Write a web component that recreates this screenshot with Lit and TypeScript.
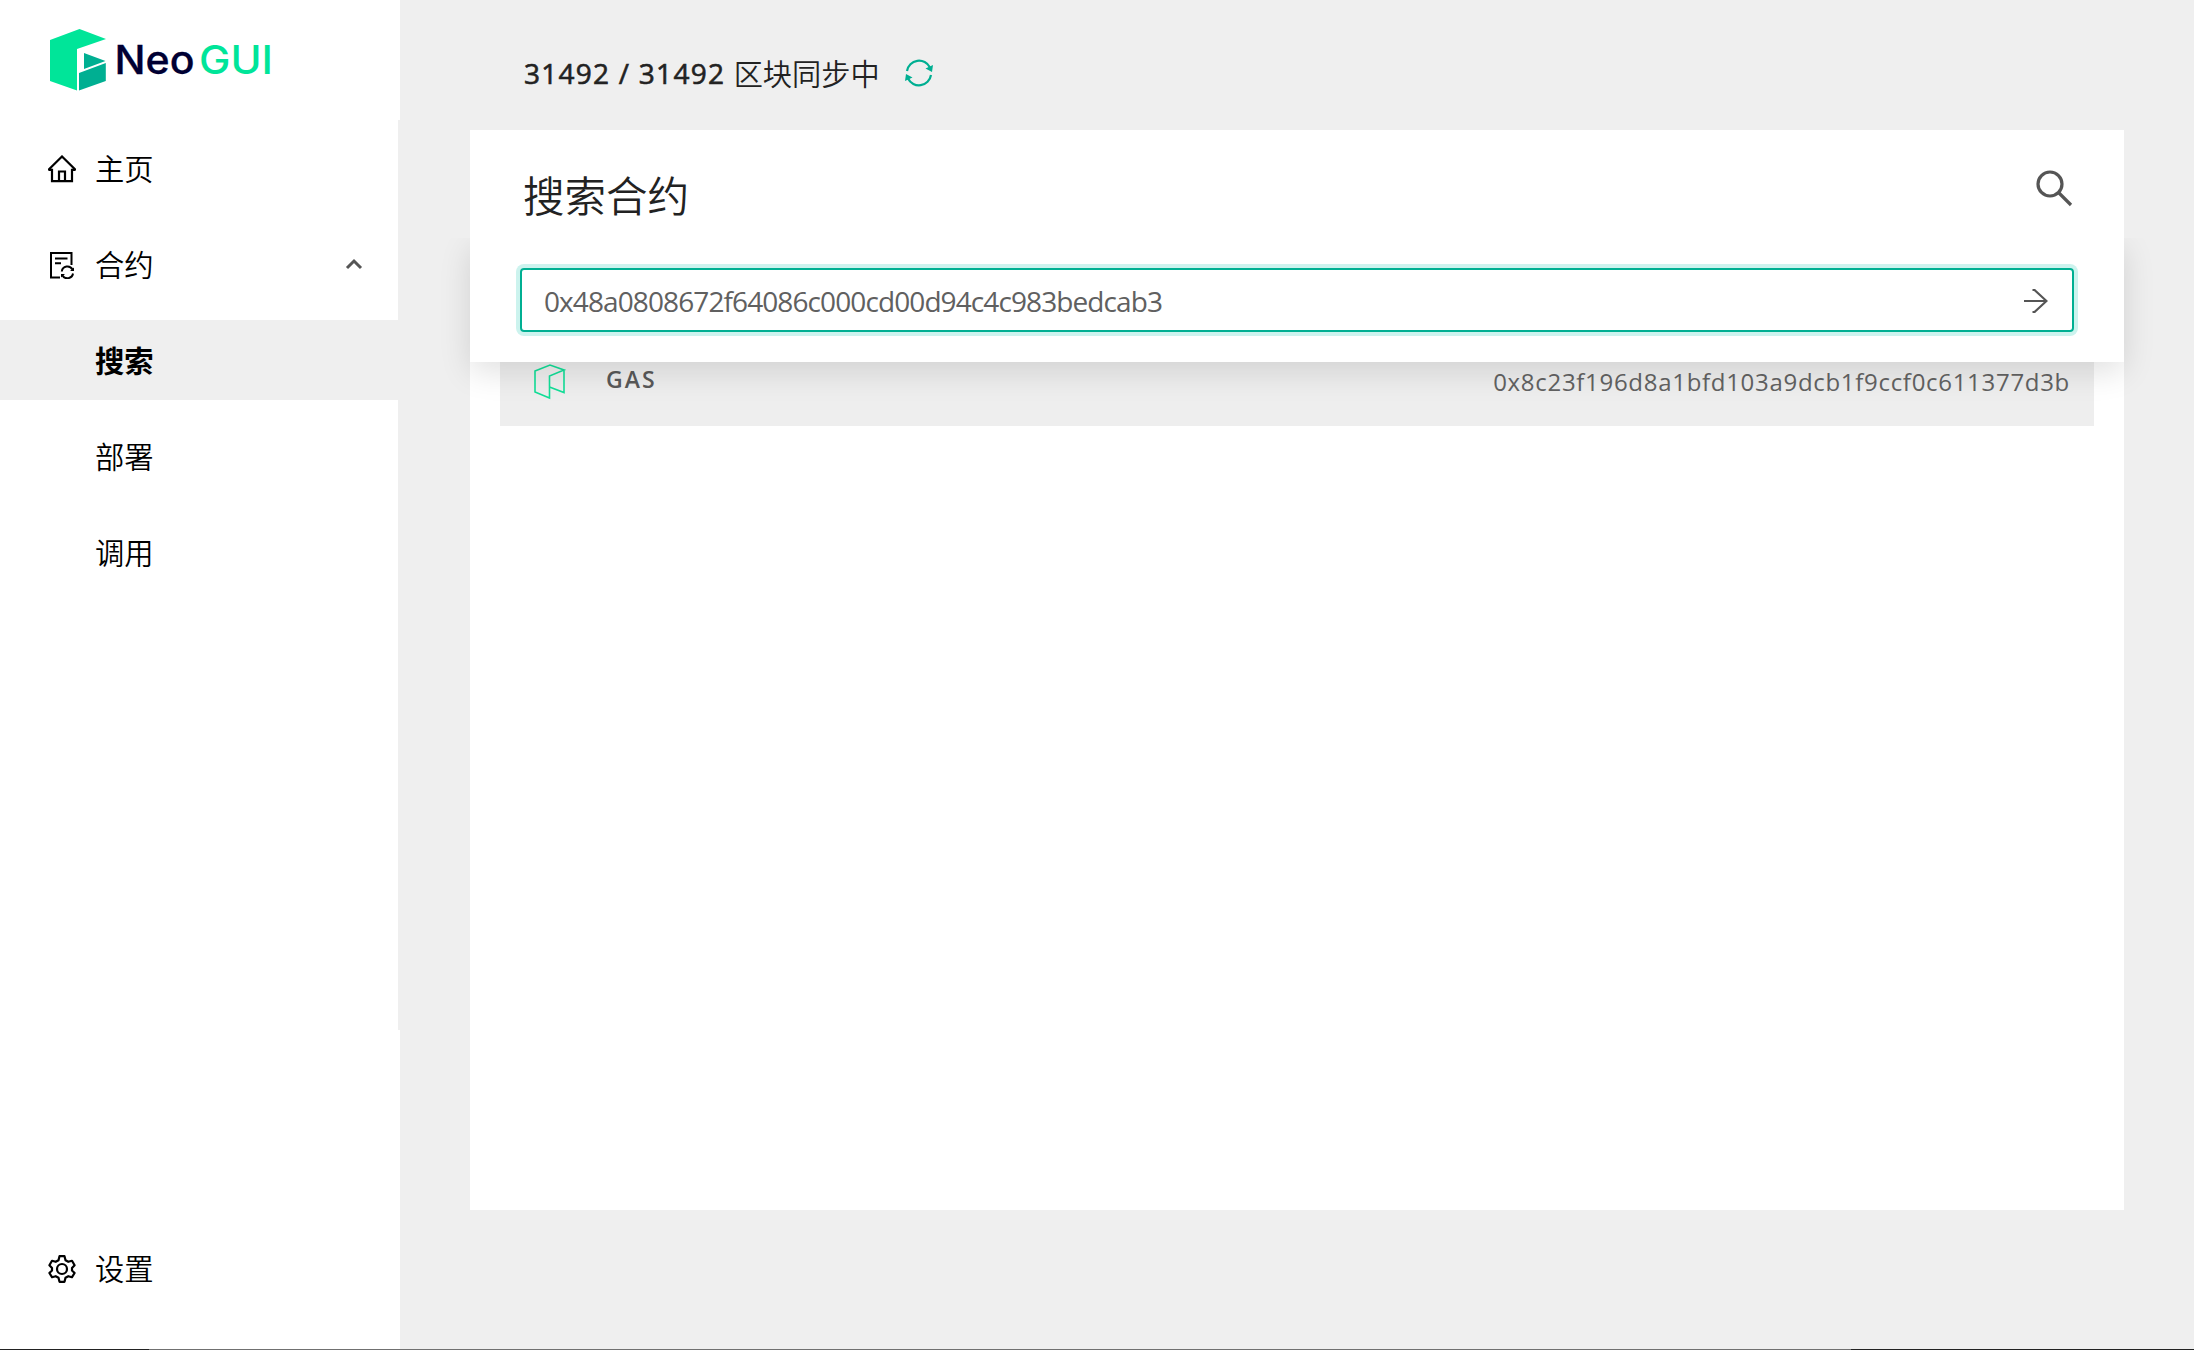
import { LitElement, html, css, svg } from "lit";
import { customElement } from "lit/decorators.js";

@customElement("app-root")
export class AppRoot extends LitElement {
  static styles = css`
    :host {
      display: block;
      font-family: "Open Sans", "Noto Sans CJK SC", sans-serif;
      color: #222;
    }
    * { box-sizing: border-box; }
    svg { display: block; flex: none; }
    .window {
      display: grid;
      grid-template-rows: 1349px 1px;
      height: 1350px;
      overflow: hidden;
      background: #efefef;
    }
    .layout { display: flex; }
    .sidebar {
      width: 400px;
      display: flex;
      flex-direction: column;
      background: #fff;
      color: #000;
    }
    .brand { height: 120px; padding: 20px 0 0 40px; }
    .menu {
      height: 910px;
      border-right: 2px solid #efefef;
    }
    .item {
      height: 80px;
      margin-bottom: 16px;
      padding: 0 34px 0 48px;
      display: flex;
      align-items: center;
      font: 350 29.3px/80px "Noto Sans CJK SC", sans-serif;
    }
    .menu .item:first-child { margin-top: 8px; }
    .item svg { margin: 1px 19px 0 0; }
    .item .chevron { margin: 0 0 0 auto; }
    .label { margin-top: -3px; }
    .sub { padding-left: 95px; }
    .active { background: #efefef; font-weight: 700; }
    .settings { margin-top: 198px; }
    .main { flex: 1; padding-left: 70px; }
    .sync {
      height: 130px;
      padding: 16px 0 0 54px;
      display: flex;
      align-items: center;
    }
    .count {
      font: 400 28px/40px "Open Sans", sans-serif;
      letter-spacing: 1.25px;
      white-space: pre;
      -webkit-text-stroke: 0.6px currentColor;
    }
    .state { font: 350 29.2px/40px "Noto Sans CJK SC", sans-serif; margin: -3px 24px 0 0; }
    .panel { width: 1654px; height: 1080px; background: #fff; }
    .head {
      height: 108px;
      padding: 0 51px 0 53px;
      display: flex;
      justify-content: space-between;
      align-items: center;
    }
    .head svg { margin-top: 8px; }
    .title { font: 350 41.5px/60px "Noto Sans CJK SC", sans-serif; padding-top: 20px; }
    .results { position: relative; height: 188px; padding: 64px 30px 0; }
    .drop-clip {
      position: absolute;
      inset: 0 -70px -80px -70px;
      padding: 0 70px;
      overflow: hidden;
    }
    .drop {
      height: 124px;
      padding: 30px 50px;
      background: #fff;
      box-shadow: 0 10px 30px rgba(0, 0, 0, 0.12);
    }
    .field {
      height: 64px;
      padding: 1px 24px 0 22px;
      display: flex;
      align-items: center;
      justify-content: space-between;
      border: 2px solid #00af92;
      border-radius: 4px;
      box-shadow: 0 0 0 4px #ccf3ee;
      font: 400 28px/58px "Open Sans", sans-serif;
      letter-spacing: -0.9px;
      color: #606060;
    }
    .field svg { margin-top: 1px; }
    .row {
      height: 124px;
      padding: 0 24px 0 34px;
      display: flex;
      align-items: center;
      background: #eee;
      color: #595959;
    }
    .row svg { margin: 36px 40px 0 0; }
    .name { font: 600 23px/30px "Open Sans", sans-serif; letter-spacing: 2px; padding-top: 30px; }
    .hash { font: 400 24px/30px "Open Sans", sans-serif; letter-spacing: 0.7px; padding-top: 36px; margin-left: auto; color: #626262; }
    .edge { display: grid; grid-template-columns: 149px 1702px 1fr; }
    .edge-dark { background: #222; }
    .edge-mid { background: #707070; }
  `;

  private logo() {
    return svg`<svg width="240" height="80" viewBox="40 20 240 80">
      <path d="M50 40 79.500 29 106 39 77 49V90.500L50 81Z" fill="#00e599"/>
      <path d="M84 53 105.500 61 84 69ZM79 73 105.800 63V81L79 90.500Z" fill="#00af92"/>
      <text x="114.500" y="73.500" font-family="Inter" font-size="39" font-weight="500" fill="#000033" stroke="#000033" stroke-width="0.300" textLength="80" lengthAdjust="spacingAndGlyphs">Neo</text>
      <text x="199" y="73.500" font-family="Inter" font-size="39" font-weight="500" fill="#00e599" textLength="74" lengthAdjust="spacingAndGlyphs">GUI</text>
    </svg>`;
  }

  render() {
    return html`<div class="window">
      <div class="layout">
        <nav class="sidebar">
          <div class="brand">${this.logo()}</div>
          <div class="menu">
            <div class="item">
              <svg width="28" height="28" viewBox="0 0 28 28" fill="none" stroke="#000" stroke-width="2.200"><path d="M0.800 15.500V14.500L14 1.500 27.200 14.500V15.500M0.800 14.800H4V26.200H24V14.800H27.200M11 26V16.500H17V26"/></svg><span class="label">主页</span>
            </div>
            <div class="item">
              <svg width="28" height="28" viewBox="0 0 28 28" fill="none" stroke="#000" stroke-width="2"><path d="M12 26.500H3V2H23.500V14M7 7.500H19.500M7 12.300H13"/><path d="M13.800 20.500A5.700 5.700 0 0 1 24.500 18.500M25 22.500A5.700 5.700 0 0 1 14.500 24.500"/><path d="M22 20H26V16.500ZM13 26.500V23H17Z" fill="#000" stroke="none"/></svg><span class="label">合约</span>
              <svg class="chevron" width="20" height="20" viewBox="0 0 20 20" fill="none" stroke="#555" stroke-width="3"><path d="M3 14 10 7 17 14"/></svg>
            </div>
            <div class="item sub active"><span class="label">搜索</span></div>
            <div class="item sub"><span class="label">部署</span></div>
            <div class="item sub"><span class="label">调用</span></div>
          </div>
          <div class="item settings">
            <svg width="28" height="28" viewBox="0 0 28 28" fill="none" stroke="#000" stroke-width="2.200" stroke-linejoin="round"><path d="M11.500 1.200H16.500L17.500 5.200 20.300 6.800 24 5.800 26.600 10.200 24 13V15.500L26.600 18 24 22.200 20.300 21.200 17.500 22.800 16.500 26.800H11.500L10.500 22.800 7.700 21.200 4 22.200 1.400 18 4 15.500V13L1.400 10.200 4 5.800 7.700 6.800 10.500 5.200Z"/><circle cx="14" cy="14" r="5"/></svg><span class="label">设置</span>
          </div>
        </nav>
        <main class="main">
          <div class="sync">
            <span class="count">31492 / 31492 </span><span class="state">区块同步中</span>
            <svg width="30" height="30" viewBox="0 0 30 30" fill="none" stroke="#00af92" stroke-width="2.200"><path d="M3 13A12.200 12.200 0 0 1 26 9.500M27 17A12.200 12.200 0 0 1 4 20.500"/><path d="M21.500 10.500 29 7 28 14ZM8.500 19.500 1 23 2 16Z" fill="#00af92" stroke="none"/></svg>
          </div>
          <section class="panel">
            <div class="head">
              <div class="title">搜索合约</div>
              <svg width="38" height="38" viewBox="0 0 38 38" fill="none" stroke="#555" stroke-width="3.200"><circle cx="15" cy="15" r="12"/><path d="M23.500 23.500 36 36"/></svg>
            </div>
            <div class="results">
              <div class="row">
                <svg width="32" height="36" viewBox="0 0 32 36" fill="none" stroke="#12df98" stroke-width="1.600"><path d="M1 7 16 1 30 6 15.500 12V34L1 28ZM30 6V28.500L15.500 23"/></svg>
                <span class="name">GAS</span>
                <span class="hash">0x8c23f196d8a1bfd103a9dcb1f9ccf0c611377d3b</span>
              </div>
              <div class="drop-clip"><div class="drop"><div class="field">
                <span>0x48a0808672f64086c000cd00d94c4c983bedcab3</span>
                <svg width="24" height="24" viewBox="0 0 24 24" fill="none" stroke="#555" stroke-width="2.200"><path d="M0 12H22M8.500 1H10.500L22.500 12 10.500 23H8.500"/></svg>
              </div></div></div>
            </div>
          </section>
        </main>
      </div>
      <div class="edge"><i class="edge-dark"></i><i class="edge-mid"></i><i class="edge-dark"></i></div>
    </div>`;
  }
}
